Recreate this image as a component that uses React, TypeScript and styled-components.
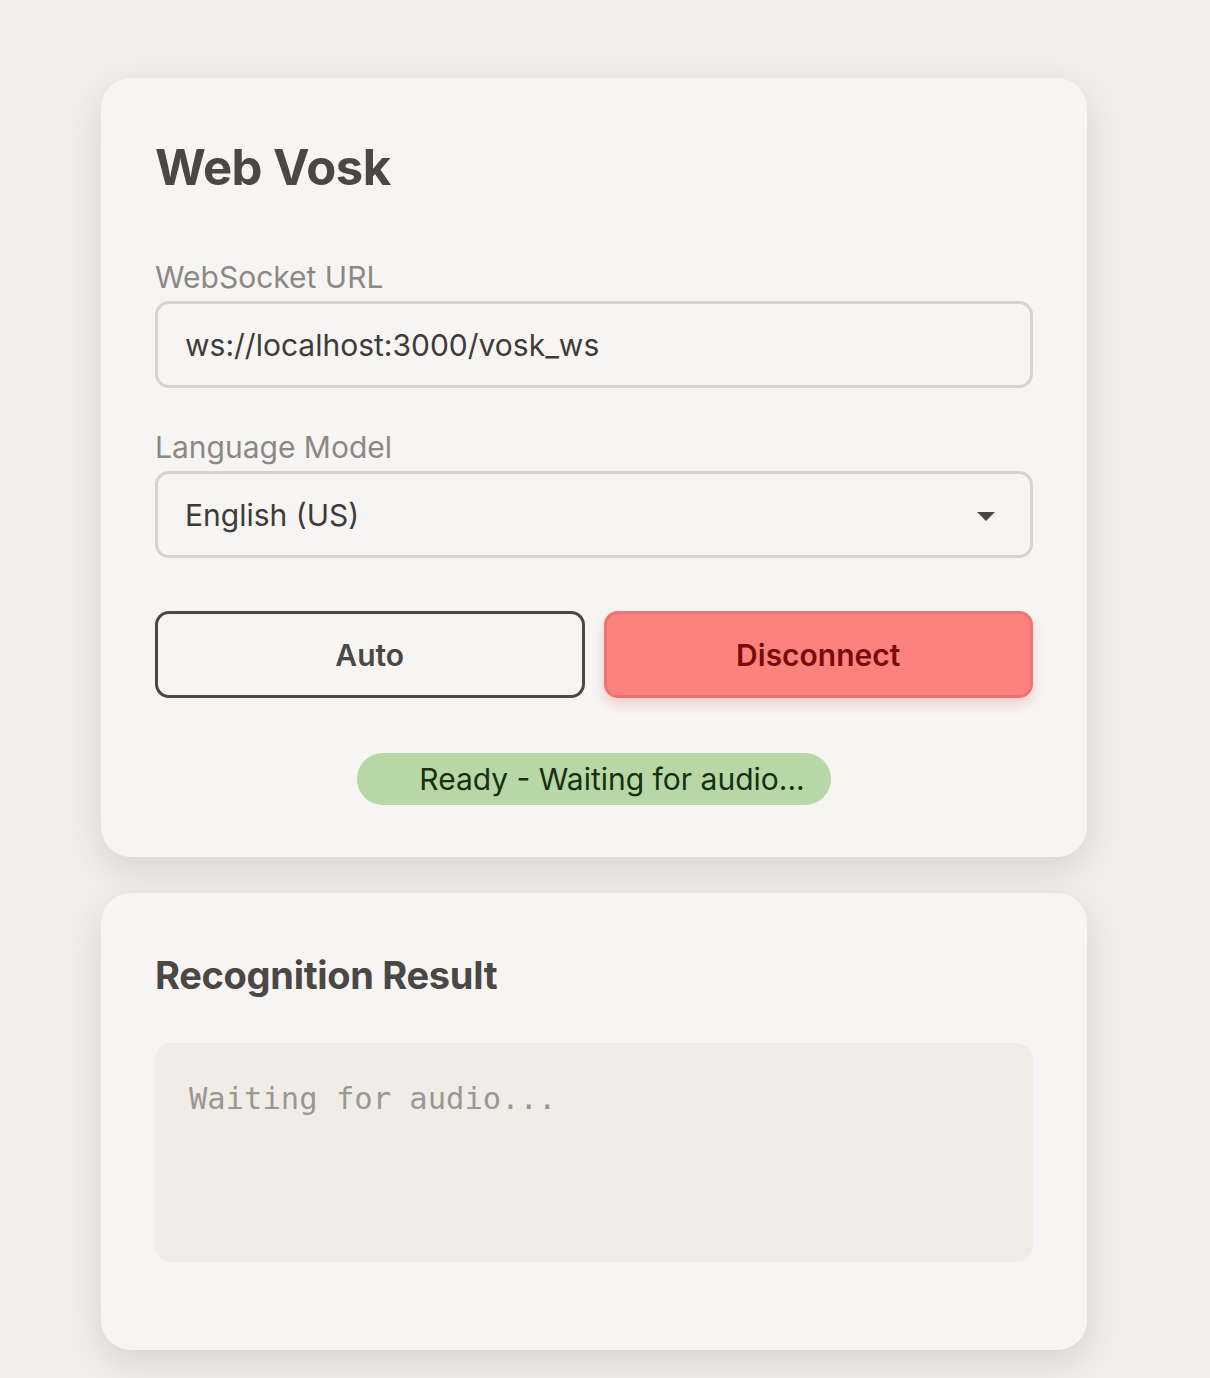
import React, { useState } from "react";
import styled, { createGlobalStyle } from "styled-components";

const GlobalStyle = createGlobalStyle`
  html, body {
    margin: 0;
    padding: 0;
    background: #f1eeea;
    font-family: Inter, "Noto Sans", "Liberation Sans", sans-serif;
    color: #4a4744;
  }
`;

const Page = styled.div`
  padding: 78px 0 30px 101px;
  display: flex;
  flex-direction: column;
  gap: 36px;
`;

const Card = styled.section<{ $bottom?: number }>`
  width: 986px;
  box-sizing: border-box;
  background: #f6f5f3;
  border-radius: 30px;
  padding: 54px 54px ${(p) => p.$bottom ?? 52}px;
  box-shadow: 0 12px 32px rgba(70, 60, 50, 0.14);
`;

const Title = styled.h1`
  margin: 0 0 56px;
  font-size: 49px;
  line-height: 72px;
  font-weight: 700;
  color: #4a4744;
  letter-spacing: -0.5px;
`;

const SubTitle = styled.h2`
  margin: 0 0 40px;
  font-size: 38px;
  line-height: 56px;
  font-weight: 700;
  color: #4a4744;
  letter-spacing: -0.3px;
`;

const Field = styled.div`
  display: flex;
  flex-direction: column;
  gap: 7px;
  margin-bottom: 42px;
`;

const Label = styled.label`
  font-size: 30px;
  line-height: 34px;
  color: #8c8985;
`;

const Input = styled.input`
  box-sizing: border-box;
  width: 100%;
  height: 87px;
  padding: 0 27px;
  border: 3px solid #d6d3d0;
  border-radius: 14px;
  background: #f6f5f3;
  font-family: inherit;
  font-size: 30px;
  color: #3e3b38;
  outline: none;
`;

const SelectWrap = styled.div`
  position: relative;
`;

const Select = styled.select`
  appearance: none;
  box-sizing: border-box;
  width: 100%;
  height: 87px;
  padding: 0 27px;
  border: 3px solid #d6d3d0;
  border-radius: 14px;
  background: #f6f5f3;
  font-family: inherit;
  font-size: 30px;
  color: #3e3b38;
  outline: none;
`;

const Caret = styled.svg`
  position: absolute;
  right: 38px;
  top: 41px;
  pointer-events: none;
`;

const ButtonRow = styled.div`
  display: grid;
  grid-template-columns: 1fr 1fr;
  gap: 19px;
  margin-top: 53px;
`;

const Button = styled.button<{ $danger?: boolean }>`
  height: 87px;
  border-radius: 14px;
  font-family: inherit;
  font-size: 30px;
  font-weight: 600;
  cursor: pointer;
  border: 3px solid ${(p) => (p.$danger ? "#ec7471" : "#4a4744")};
  background: ${(p) => (p.$danger ? "#fb827d" : "transparent")};
  color: ${(p) => (p.$danger ? "#7a0b0d" : "#4a4744")};
  box-shadow: ${(p) => (p.$danger ? "0 6px 12px rgba(235, 110, 105, 0.3)" : "none")};
`;

const StatusRow = styled.div`
  display: flex;
  justify-content: center;
  margin-top: 55px;
`;

const Status = styled.div`
  height: 52px;
  display: flex;
  align-items: center;
  padding: 0 26px 0 62px;
  border-radius: 26px;
  background: #b7d8a6;
  color: #173010;
  font-size: 30px;
`;

const ResultBox = styled.div`
  min-height: 219px;
  box-sizing: border-box;
  background: #f0ede8;
  border-radius: 16px;
  padding: 38px 34px;
  font-family: "DejaVu Sans Mono", "Liberation Mono", monospace;
  font-size: 30.5px;
  line-height: 36px;
  color: #9b9792;
`;

export default function App() {
  const [url, setUrl] = useState("ws://localhost:3000/vosk_ws");
  const [lang, setLang] = useState("en-us");

  return (
    <>
      <GlobalStyle />
      <Page>
        <Card>
          <Title>Web Vosk</Title>
          <Field>
            <Label>WebSocket URL</Label>
            <Input value={url} onChange={(e) => setUrl(e.target.value)} />
          </Field>
          <Field>
            <Label>Language Model</Label>
            <SelectWrap>
              <Select value={lang} onChange={(e) => setLang(e.target.value)}>
                <option value="en-us">English (US)</option>
              </Select>
              <Caret width="18" height="9" viewBox="0 0 18 9">
                <path d="M0 0h18L9 9z" fill="#4a4744" />
              </Caret>
            </SelectWrap>
          </Field>
          <ButtonRow>
            <Button>Auto</Button>
            <Button $danger>Disconnect</Button>
          </ButtonRow>
          <StatusRow>
            <Status>Ready - Waiting for audio...</Status>
          </StatusRow>
        </Card>
        <Card $bottom={88}>
          <SubTitle>Recognition Result</SubTitle>
          <ResultBox>Waiting for audio...</ResultBox>
        </Card>
      </Page>
    </>
  );
}
